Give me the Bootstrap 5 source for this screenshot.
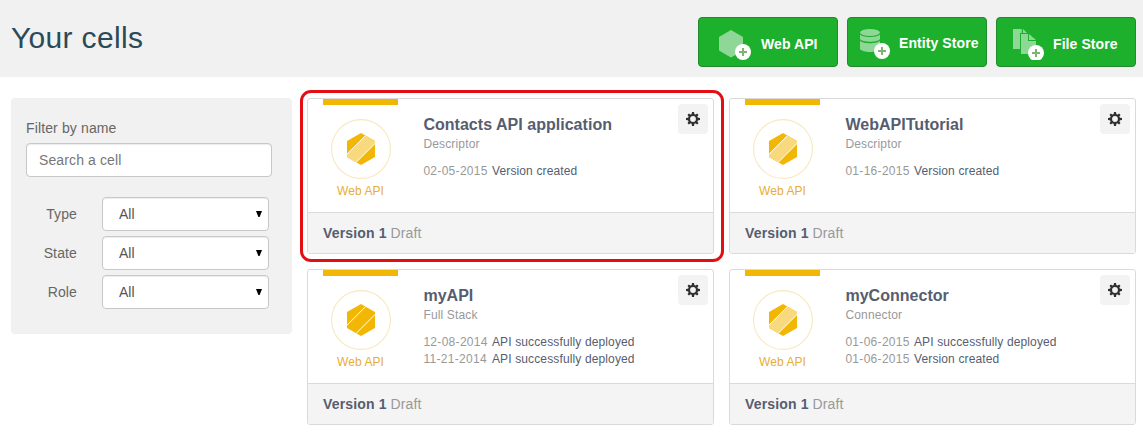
<!DOCTYPE html>
<html lang="en">
<head>
<meta charset="utf-8">
<meta name="viewport" content="width=device-width, initial-scale=1">
<title>Your cells</title>
<link rel="stylesheet" href="https://cdn.jsdelivr.net/npm/bootstrap@5.3.0/dist/css/bootstrap.min.css">
<style>
body{font-family:"Liberation Sans",Arial,sans-serif;font-size:14px;line-height:20px;color:#666;background:#fff;overflow:hidden}
.page-head{height:77px;background:#f1f1f1;padding:0 7px 0 11px}
.page-head h1{font-size:30px;line-height:33px;font-weight:400;color:#2b4a58;margin:21px 0 0;letter-spacing:.33px}
.head-actions{gap:9px;margin-top:17px}
.btn-create{width:140px;height:50px;background:#1db02c;border:1px solid #218a2c;border-radius:4px;color:#fff;font-size:14px;line-height:20px;font-weight:700;padding:0;letter-spacing:.08px;white-space:nowrap}
.btn-create:hover{background:#1a9e28;color:#fff}
.btn-create span{padding-top:4px}
.btn-create .raised{padding-top:2px}
.btn-create svg{flex-shrink:0}
.main-area{padding:21px 7px 0 11px;gap:15px}
.filters{width:281px;height:236px;background:#f1f1f1;border-radius:4px;padding:20px 20px 0 15px}
.filters label{letter-spacing:.13px}
.filters .form-control,.filters .form-select{font-size:14px;line-height:20px;height:34px;border:1px solid #c8c8c8;border-radius:4px;box-shadow:inset 0 1px 1px rgba(0,0,0,.075);color:#555}
.filters .form-control{padding:6px 12px;margin-top:5px;letter-spacing:.12px}
.filters .form-control::placeholder{color:#777;opacity:1}
.filter-rows{margin-top:20px;gap:5px;padding-right:3px}
.filter-rows label{width:51px;text-align:right;margin-right:25px}
.filters .form-select{width:167px;padding:6px 16px;background:#fff url("data:image/svg+xml,%3Csvg xmlns='http://www.w3.org/2000/svg' viewBox='0 0 6 6'%3E%3Cpath d='M0 0h6L3.6 6H2.4z'/%3E%3C/svg%3E") no-repeat right 6px center/6px 6px}
.cells{display:grid;grid-template-columns:407px 407px;gap:15px}
.cell{height:156px;border:1px solid #dadada;border-radius:3px;position:relative}
.cell-main{height:113px;padding-left:15px}
.cell-kind{width:76px;color:#e8ad35;font-size:12px;line-height:16px}
.cell-kind::before{content:"";display:block;width:75px;height:6px;background:#f2b705}
.cell-kind svg{margin-top:14px;margin-bottom:4px}
.cell-kind div{margin-left:-1px;letter-spacing:.08px}
.cell-info{margin-left:24.4px;padding-top:16px}
.cell-info h2{font-size:16px;line-height:20px;font-weight:700;color:#565d70;margin:0 0 1px;letter-spacing:.03px}
.cell-sub{font-size:12px;line-height:17px;color:#999;margin-bottom:10px;letter-spacing:.16px}
.cell-log{font-size:12px;line-height:17px;color:#565d70;letter-spacing:.13px}
.cell-log time{display:inline-block;width:68.6px;color:#999;letter-spacing:.3px}
.cell-foot{height:41px;background:#f4f4f4;border-top:1px solid #dadada;padding-left:15px;color:#999;border-radius:0 0 2px 2px;letter-spacing:.1px}
.cell-foot b{color:#565d70;letter-spacing:.15px}
.gear-btn{position:absolute;top:5px;right:5px;width:30px;height:30px;background:#f3f3f3;border:0;border-radius:4px;padding:0}
.selected-ring{position:absolute;inset:-9px -11px -9px -8px;border:3px solid #e30d12;border-radius:11px;pointer-events:none}
</style>
</head>
<body>
<svg width="0" height="0" class="position-absolute">
  <defs>
    <symbol id="gear" viewBox="0 0 14 14"><g fill="#2f3230"><path fill-rule="evenodd" d="M7 1.900a5.100 5.100 0 1 0 0 10.200A5.100 5.100 0 0 0 7 1.900zm0 2.200a2.900 2.900 0 1 1 0 5.800 2.900 2.900 0 0 1 0-5.800z"/><path d="M6 0h2l.5 3h-3zM6 14h2l.5-3h-3zM0 6v2l3 .5v-3zM14 6v2l-3 .5v-3z"/><path transform="rotate(45 7 7)" d="M6 .2h2l.5 3h-3zM6 13.800h2l.5-3h-3zM.2 6v2l3 .5v-3zM13.800 6v2l-3 .5v-3z"/></g></symbol>
    <clipPath id="hexclip"><path d="M30 14l14 8v16l-14 8-14-8V22z"/></clipPath>
    <symbol id="hex-light" viewBox="0 0 60 60"><circle cx="30" cy="30" r="29.4" fill="#fff" stroke="#f9e8bd" stroke-width="1.1"/><g clip-path="url(#hexclip)"><path fill="#f2b705" d="M14 12h32v36H14z"/><path fill="#f8d97e" stroke="#fff" d="M10 41.200L41.200 10 58.500 10 10 58.500z"/></g></symbol>
    <symbol id="hex-full" viewBox="0 0 60 60"><circle cx="30" cy="30" r="29.4" fill="#fff" stroke="#f9e8bd" stroke-width="1.1"/><g clip-path="url(#hexclip)"><path fill="#f2b705" d="M14 12h32v36H14z"/><path fill="none" stroke="#fff" d="M10 41.200L41.200 10M58.500 10L10 58.500"/></g></symbol>
    <symbol id="plus" viewBox="0 0 16 16"><circle cx="8" cy="8" r="8" fill="#fff"/><path stroke="#7db56a" stroke-width="2" d="M8 4v8M4 8h8"/></symbol>
  </defs>
</svg>

<header class="page-head d-flex justify-content-between align-items-start">
  <h1>Your cells</h1>
  <div class="head-actions d-flex">
    <button class="btn btn-create d-flex align-items-center" type="button">
      <svg class="ms-3" width="46" height="36" viewBox="0 0 46 36"><path fill="#8fd796" d="M16 6l12 7v13.500l-12 7-12-7V13z"/><use href="#plus" x="20" y="20" width="16" height="16"/></svg>
      <span>Web API</span>
    </button>
    <button class="btn btn-create d-flex align-items-center" type="button">
      <svg class="ms-2" width="43" height="36" viewBox="0 -1 43 36"><g fill="#8fd796"><ellipse cx="14" cy="7.500" rx="10" ry="3.500"/><path d="M4 9.200c2.500 3.700 17.500 3.700 20 0V14c-2.500 3.700-17.500 3.700-20 0zM4 15.500c2.500 3.700 17.500 3.700 20 0V24c-2.500 4-17.500 4-20 0z"/></g><use href="#plus" x="18" y="18" width="16" height="16"/></svg>
      <span class="raised">Entity Store</span>
    </button>
    <button class="btn btn-create d-flex align-items-center" type="button">
      <svg class="ms-3" width="40" height="36" viewBox="0 -1 40 36"><g fill="#8fd796"><path d="M0 4h8.800v4H7v16H0zM10 4l4 4h-4zM8 9h7v7h8v13H8zM16 9l7 6h-7z"/></g><use href="#plus" x="15" y="20" width="16" height="16"/></svg>
      <span>File Store</span>
    </button>
  </div>
</header>

<main class="main-area d-flex align-items-start">
  <aside class="filters flex-shrink-0">
    <label class="d-block" for="q">Filter by name</label>
    <input id="q" class="form-control" type="text" placeholder="Search a cell">
    <div class="filter-rows d-flex flex-column align-items-end">
      <div class="d-flex align-items-center"><label for="t">Type</label><select id="t" class="form-select"><option>All</option></select></div>
      <div class="d-flex align-items-center"><label for="s">State</label><select id="s" class="form-select"><option>All</option></select></div>
      <div class="d-flex align-items-center"><label for="r">Role</label><select id="r" class="form-select"><option>All</option></select></div>
    </div>
  </aside>

  <section class="cells">
    <article class="cell">
      <div class="cell-main d-flex">
        <div class="cell-kind text-center"><svg width="60" height="60"><use href="#hex-light"/></svg><div>Web API</div></div>
        <div class="cell-info"><h2>Contacts API application</h2><div class="cell-sub">Descriptor</div>
          <div class="cell-log"><time>02-05-2015</time>Version created</div></div>
      </div>
      <div class="cell-foot d-flex align-items-center"><b>Version 1</b>&nbsp;Draft</div>
      <button class="gear-btn d-flex align-items-center justify-content-center" type="button" aria-label="Settings"><svg width="14" height="14"><use href="#gear"/></svg></button>
      <div class="selected-ring"></div>
    </article>
    <article class="cell">
      <div class="cell-main d-flex">
        <div class="cell-kind text-center"><svg width="60" height="60"><use href="#hex-light"/></svg><div>Web API</div></div>
        <div class="cell-info"><h2>WebAPITutorial</h2><div class="cell-sub">Descriptor</div>
          <div class="cell-log"><time>01-16-2015</time>Version created</div></div>
      </div>
      <div class="cell-foot d-flex align-items-center"><b>Version 1</b>&nbsp;Draft</div>
      <button class="gear-btn d-flex align-items-center justify-content-center" type="button" aria-label="Settings"><svg width="14" height="14"><use href="#gear"/></svg></button>
    </article>
    <article class="cell">
      <div class="cell-main d-flex">
        <div class="cell-kind text-center"><svg width="60" height="60"><use href="#hex-full"/></svg><div>Web API</div></div>
        <div class="cell-info"><h2>myAPI</h2><div class="cell-sub">Full Stack</div>
          <div class="cell-log"><time>12-08-2014</time>API successfully deployed</div>
          <div class="cell-log"><time>11-21-2014</time>API successfully deployed</div></div>
      </div>
      <div class="cell-foot d-flex align-items-center"><b>Version 1</b>&nbsp;Draft</div>
      <button class="gear-btn d-flex align-items-center justify-content-center" type="button" aria-label="Settings"><svg width="14" height="14"><use href="#gear"/></svg></button>
    </article>
    <article class="cell">
      <div class="cell-main d-flex">
        <div class="cell-kind text-center"><svg width="60" height="60"><use href="#hex-light"/></svg><div>Web API</div></div>
        <div class="cell-info"><h2>myConnector</h2><div class="cell-sub">Connector</div>
          <div class="cell-log"><time>01-06-2015</time>API successfully deployed</div>
          <div class="cell-log"><time>01-06-2015</time>Version created</div></div>
      </div>
      <div class="cell-foot d-flex align-items-center"><b>Version 1</b>&nbsp;Draft</div>
      <button class="gear-btn d-flex align-items-center justify-content-center" type="button" aria-label="Settings"><svg width="14" height="14"><use href="#gear"/></svg></button>
    </article>
  </section>
</main>
<script src="https://cdn.jsdelivr.net/npm/bootstrap@5.3.0/dist/js/bootstrap.bundle.min.js"></script>
</body>
</html>
